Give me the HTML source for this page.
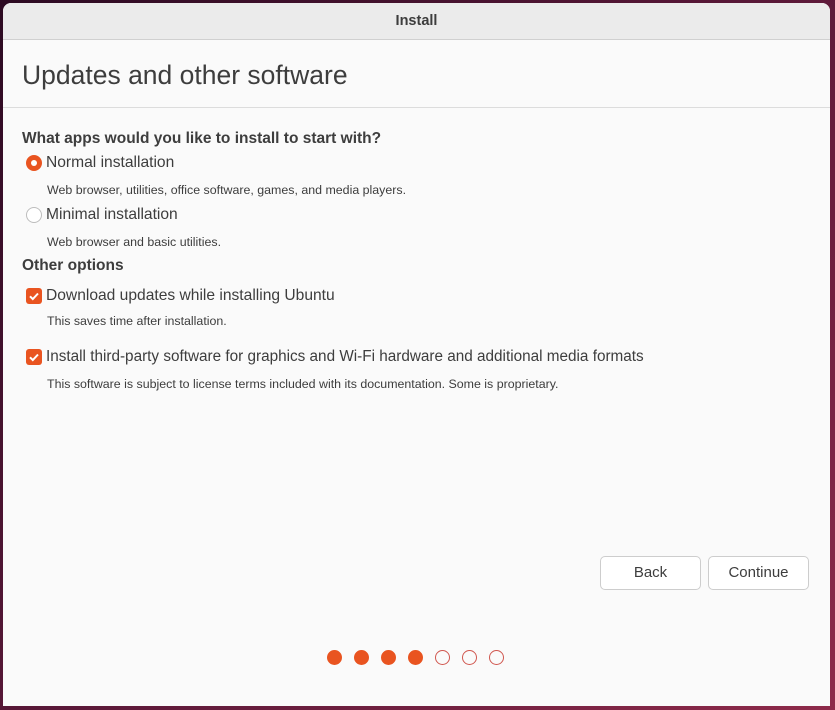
<!DOCTYPE html>
<html><head><style>
body{margin:0;width:835px;height:710px;overflow:hidden;background:linear-gradient(135deg,#2c0a22 0%,#5a1838 50%,#8e2a4a 100%);font-family:"Liberation Sans","DejaVu Sans",sans-serif;color:#3d3d3d;position:relative}
.win{position:absolute;left:3px;top:3px;width:827px;height:703px;background:#fafafa;border-radius:8px 8px 0 0;overflow:hidden}
.tb{position:absolute;left:0;top:0;width:100%;height:36px;background:#ebebeb;border-bottom:1px solid #d0d0d0;text-align:center;line-height:37px;font-weight:bold;font-size:14.5px;color:#3d3d3d}
.hl{position:absolute;left:0;top:104px;width:100%;height:1px;background:#dcdcdc}
.t{position:absolute;white-space:nowrap}
h1{position:absolute;left:19px;top:57px;margin:0;font-weight:normal;font-size:26.5px;color:#3d3d3d}
.b{font-weight:bold;font-size:15.5px}
.n{font-size:15.6px}
.s{font-size:12.4px}
.radio{position:absolute;width:16px;height:16px;border-radius:50%;box-sizing:border-box}
.cb{position:absolute;width:16px;height:16px;border-radius:3px;background:#e95420}
.btn{position:absolute;top:553px;height:34px;border:1px solid #cdcdcd;border-radius:5px;background:#fff;box-sizing:border-box;text-align:center;line-height:32px;font-size:15px;color:#3d3d3d}
.dot{position:absolute;top:647px;width:15px;height:15px;border-radius:50%;box-sizing:border-box}
</style></head><body>
<div class="win">
<div class="tb">Install</div>
<h1>Updates and other software</h1>
<div class="hl"></div>
<div class="t b" style="left:19px;top:127px">What apps would you like to install to start with?</div>
<div class="radio" style="left:23px;top:152px;background:#e95420"><div style="position:absolute;left:5px;top:5px;width:6px;height:6px;border-radius:50%;background:#fff"></div></div>
<div class="t n" style="left:43px;top:151px">Normal installation</div>
<div class="t s" style="left:44px;top:180px">Web browser, utilities, office software, games, and media players.</div>
<div class="radio" style="left:23px;top:204px;border:1px solid #bdbdbd;background:#fff"></div>
<div class="t n" style="left:43px;top:203px">Minimal installation</div>
<div class="t s" style="left:44px;top:232px">Web browser and basic utilities.</div>
<div class="t b" style="left:19px;top:254px">Other options</div>
<div class="cb" style="left:23px;top:285px"><svg width="16" height="16"><path d="M4 8.3l2.8 2.8L12 5.5" stroke="#fff" stroke-width="2" fill="none"/></svg></div>
<div class="t n" style="left:43px;top:284px">Download updates while installing Ubuntu</div>
<div class="t s" style="left:44px;top:311px">This saves time after installation.</div>
<div class="cb" style="left:23px;top:346px"><svg width="16" height="16"><path d="M4 8.3l2.8 2.8L12 5.5" stroke="#fff" stroke-width="2" fill="none"/></svg></div>
<div class="t n" style="left:43px;top:345px;font-size:15.3px">Install third-party software for graphics and Wi-Fi hardware and additional media formats</div>
<div class="t s" style="left:44px;top:374px">This software is subject to license terms included with its documentation. Some is proprietary.</div>
<div class="btn" style="left:597px;width:101px">Back</div>
<div class="btn" style="left:705px;width:101px">Continue</div>
<div class="dot" style="left:324px;background:#e95420"></div>
<div class="dot" style="left:351px;background:#e95420"></div>
<div class="dot" style="left:378px;background:#e95420"></div>
<div class="dot" style="left:405px;background:#e95420"></div>
<div class="dot" style="left:432px;border:1.5px solid #d0574f"></div>
<div class="dot" style="left:459px;border:1.5px solid #d0574f"></div>
<div class="dot" style="left:486px;border:1.5px solid #d0574f"></div>
</div>
</body></html>
